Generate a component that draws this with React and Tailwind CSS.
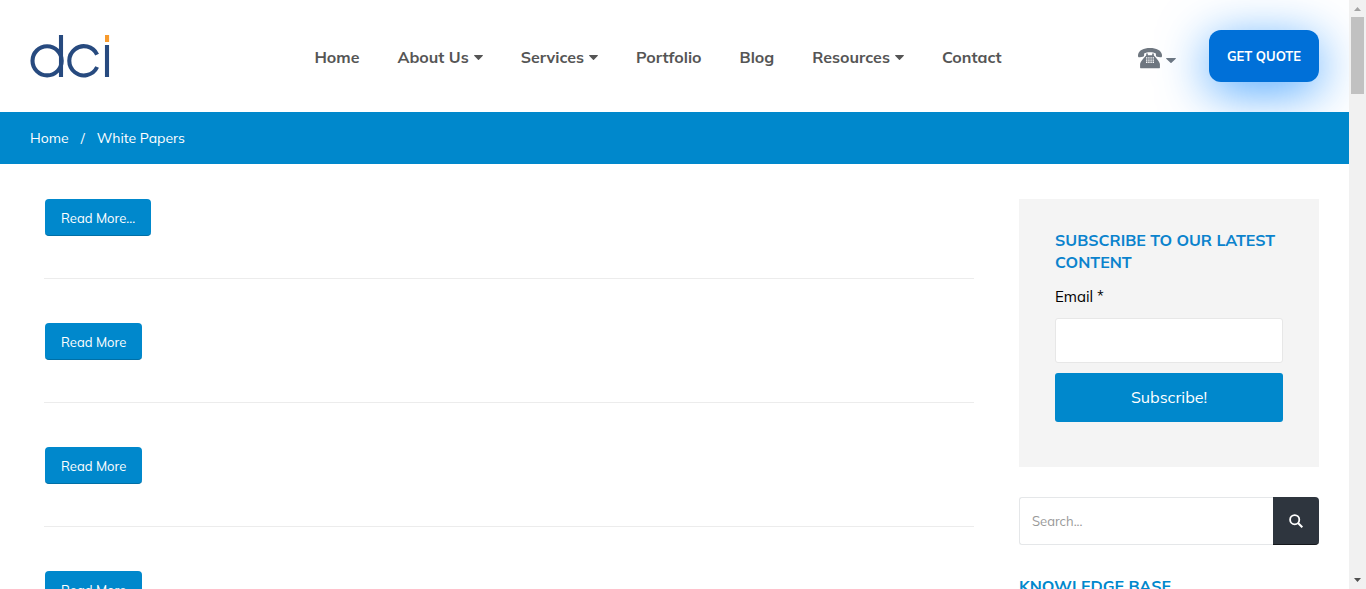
import React from "react";

const NAV = [
  { label: "Home" },
  { label: "About Us", menu: true },
  { label: "Services", menu: true },
  { label: "Portfolio" },
  { label: "Blog" },
  { label: "Resources", menu: true },
  { label: "Contact" },
];

const PAPERS = ["Read More...", "Read More", "Read More", "Read More"];

function Caret({ className }) {
  return (
    <svg viewBox="0 0 10 5" className={className} fill="currentColor" preserveAspectRatio="none" aria-hidden="true">
      <path d="M.6 0h8.8c.5 0 .7.5.4.8L5.5 4.8a.7.7 0 0 1-1 0L.2.8C-.1.5.1 0 .6 0z" />
    </svg>
  );
}

function Logo() {
  return (
    <svg viewBox="0 0 80 44" className="h-11 w-20" fill="none" role="img" aria-label="dci">
      <g stroke="#274a7f" strokeWidth="4.1">
        <circle cx="17.1" cy="25.8" r="14.6" />
        <path d="M31 0v42" />
        <path d="M67.100 19.6A14.6 14.6 0 1 0 67.100 32" />
        <path d="M77 10v32" />
      </g>
      <path d="M75 0h4.1v7H75z" fill="#f79a2c" />
    </svg>
  );
}

function Phone() {
  return (
    <svg viewBox="0 0 24 21" className="h-[21px] w-6" fill="currentColor" aria-hidden="true">
      <path d="M12 0C5.600 0 .9 2.200.1 6.600c-.2 1.300-.1 2 .2 2.400.3.400.8.400 1.500.3l3.100-.5c.9-.2 1.200-.6 1.200-1.500V5.400C7.700 4.600 9.700 4.200 12 4.200s4.300.4 5.900 1.200v1.900c0 .9.3 1.300 1.200 1.500l3.100.5c.7.1 1.200.1 1.500-.3.3-.4.400-1.100.2-2.400C23.100 2.200 18.400 0 12 0z" />
      <path
        fillRule="evenodd"
        d="M8.200 5.400h1.600v1.800h4.400V5.400h1.600v2c1.200 1.200 5.800 5.700 6.100 8.500v3.900c0 .3-.2.5-.5.500H2.600c-.3 0-.5-.2-.5-.5v-3.900c.3-2.800 4.900-7.300 6.100-8.500zM8 9.200v1.400h1.400V9.200zm2.200 0v1.400h1.400V9.200zm2.200 0v1.400h1.400V9.200zm2.200 0v1.400H16V9.200zM8 11.400v1.400h1.400v-1.400zm2.200 0v1.400h1.400v-1.400zm2.200 0v1.400h1.400v-1.400zm2.200 0v1.400H16v-1.400zM8 13.600V15h1.400v-1.400zm2.200 0V15h1.400v-1.400zm2.200 0V15h1.400v-1.400zm2.200 0V15H16v-1.400z"
      />
    </svg>
  );
}

function Header() {
  return (
    <header className="flex h-28 shrink-0 items-center justify-between px-[30px]">
      <a href="#home" className="pt-0.5">
        <Logo />
      </a>
      <nav className="flex gap-[38px] pt-0.5 pl-[68px] text-base font-bold text-[#555]">
        {NAV.map((item) => (
          <a key={item.label} href="#nav" className="flex items-center gap-[5px] whitespace-nowrap">
            {item.label}
            {item.menu && <Caret className="h-[5px] w-[9px]" />}
          </a>
        ))}
      </nav>
      <div className="flex items-center gap-[33px]">
        <button type="button" aria-label="Phone numbers" className="flex items-center gap-1 pt-1 text-[#6f7780]">
          <Phone />
          <Caret className="mt-1 h-[5px] w-2.5" />
        </button>
        <a
          href="#quote"
          className="flex h-[52px] w-[110px] items-center justify-center rounded-xl bg-[#0070d8] pt-0.5 text-[13px] font-bold text-white shadow-[0_10px_50px_rgba(0,128,255,0.7)]"
        >
          GET QUOTE
        </a>
      </div>
    </header>
  );
}

function Sidebar() {
  return (
    <aside className="flex w-[300px] shrink-0 flex-col">
      <form className="flex flex-col bg-[#f4f4f4] px-9 pt-[30px] pb-[45px]">
        <h2 className="text-base leading-[22px] font-bold text-[#0b83cd]">SUBSCRIBE TO OUR LATEST CONTENT</h2>
        <label htmlFor="email" className="mt-3 text-[15px] leading-6 text-black">
          Email *
        </label>
        <input
          id="email"
          type="email"
          className="mt-[9px] h-[45px] w-full rounded-[3px] border border-[#e7e7e7] bg-white px-3 text-sm"
        />
        <button type="submit" className="mt-2.5 h-[49px] rounded-[3px] bg-[#0088cc] pb-0.5 text-base text-white">
          Subscribe!
        </button>
      </form>
      <form className="mt-[30px] flex h-12">
        <input
          type="search"
          aria-label="Search"
          placeholder="Search..."
          className="min-w-0 flex-1 rounded-l-[3px] border border-r-0 border-[#e5e7e9] bg-white px-3 pt-0.5 text-[13px] placeholder:text-[#999]"
        />
        <button
          type="submit"
          aria-label="Search"
          className="flex w-[46px] items-center justify-center rounded-r-[4px] border-b border-[#15181c] bg-[#2e353e] text-white"
        >
          <svg viewBox="0 0 14 14" className="size-3.5" fill="none" stroke="currentColor" strokeWidth="1.800" aria-hidden="true">
            <circle cx="5.700" cy="5.700" r="4.600" />
            <path d="M9 9l4.300 4.300" strokeWidth="2" />
          </svg>
        </button>
      </form>
      <h2 className="mt-[30px] text-base leading-[22px] font-bold text-[#0088cc]">KNOWLEDGE BASE</h2>
    </aside>
  );
}

function ScrollRail() {
  return (
    <div className="relative flex w-[17px] shrink-0 flex-col items-center bg-[#f1f1f1]" aria-hidden="true">
      <svg viewBox="0 0 17 17" className="size-[17px]" fill="#a3a3a3">
        <path d="M5 11h7L8.500 7z" />
      </svg>
      <div className="h-[77px] w-[13px] bg-[#c1c1c1]" />
      <svg viewBox="0 0 17 17" className="mt-auto size-[17px]" fill="#505050">
        <path d="M5 6h7l-3.500 4z" />
      </svg>
    </div>
  );
}

export default function App() {
  return (
    <div className="flex h-screen overflow-hidden bg-white font-[Mulish,Muli,Lato,sans-serif]">
      <div className="flex min-w-0 flex-1 flex-col overflow-hidden">
        <Header />
        <nav
          aria-label="Breadcrumb"
          className="relative flex h-[52px] shrink-0 items-center gap-3 bg-[#0088cc] px-[30px] text-sm text-white"
        >
          <a href="#home">Home</a>
          <span>/</span>
          <span>White Papers</span>
        </nav>
        <div className="flex gap-[45px] pt-[35px] pr-[30px] pl-11">
          <main className="min-w-0 flex-1">
            {PAPERS.map((label, i) => (
              <article key={i} className="mb-11 flex border-b border-[#ececec] pb-[42px]">
                <a
                  href="#paper"
                  className="ml-px flex h-[37px] items-center rounded-[4px] border-b border-[#006fa6] bg-[#0088cc] px-4 pt-[3px] text-[13px] text-white"
                >
                  {label}
                </a>
              </article>
            ))}
          </main>
          <Sidebar />
        </div>
      </div>
      <ScrollRail />
    </div>
  );
}
